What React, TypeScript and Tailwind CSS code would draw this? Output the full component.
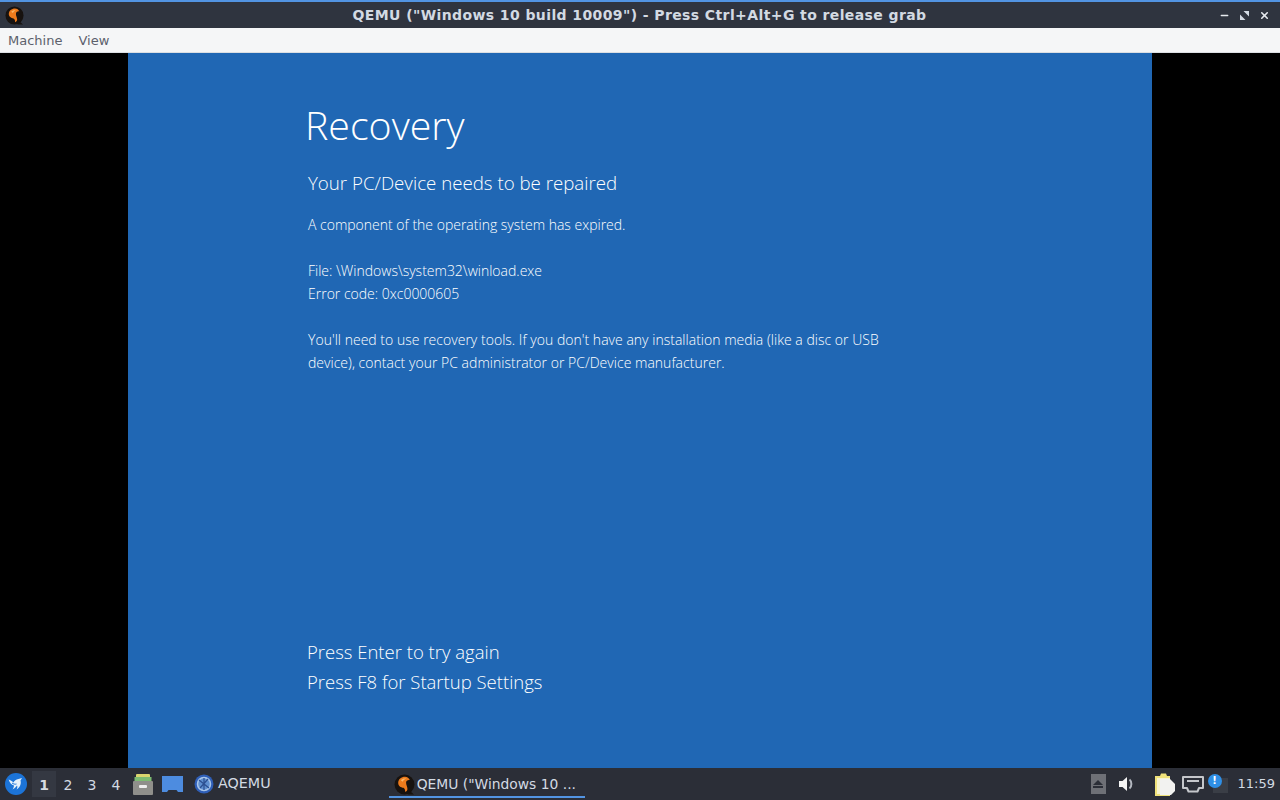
import { Minus, X } from "lucide-react";

const QemuLogo = ({ size }: { size: number }) => (
  <svg width={size} height={size} viewBox="0 0 20 20">
    <circle cx="10" cy="10" r="9.500" fill="#17120f" />
    <path d="M15 16l4 3.500h-6z" fill="#17120f" />
    <path d="M4 8.500C4 4.800 7 2.500 10.500 2.500c2.300 0 3.800 1.300 4.500 3.200-1.800-.4-3.500.6-3.500 2.600 0 2.200 1.300 3.700 1.300 6 0 1.500-1 2.400-2.300 2.700.3-1.500-.2-2.900-1.500-3.800C6.500 12.500 4 11.500 4 8.500z" fill="#ec7a1c" />
    <path d="M6.500 6c1.300-1.400 3.300-2 5.500-1.400-1.800.3-3 1.300-3.600 2.800z" fill="#f9b566" />
  </svg>
);

function Workspace({ n, active }: { n: string; active?: boolean }) {
  return (
    <div className={active ? "w-[24px] h-[26px] flex items-center justify-center pt-[2px] bg-[#343842] text-[#d8dce2] font-bold" : "w-[24px] h-[26px] flex items-center justify-center pt-[2px] text-[#d3dae3]"}>
      {n}
    </div>
  );
}

export default function App() {
  return (
    <div className="w-[1280px] h-[800px] flex flex-col overflow-hidden bg-black font-['DejaVu_Sans',sans-serif]">
      <div className="h-[28px] shrink-0 bg-[#2f343f] border-t-2 border-[#5294e2] flex items-center pl-[5px] pr-[10px]">
        <QemuLogo size={19} />
        <div className="flex-1 text-center text-[14px] tracking-[0.4px] font-bold text-[#d3dae3] pl-[36px]">QEMU ("Windows 10 build 10009") - Press Ctrl+Alt+G to release grab</div>
        <div className="flex items-center gap-[9px] text-[#e6e9ee]">
          <Minus size={11} strokeWidth={3} />
          <svg width="11" height="11" viewBox="0 0 11 11" fill="#d3dae3"><path d="M1 10V4.500L6.500 10zM10 1v5.500L4.500 1z" /></svg>
          <X size={11} strokeWidth={3.500} />
        </div>
      </div>
      <div className="h-[25px] shrink-0 bg-[#f5f6f7] border-b border-[#dcdfe3] flex items-center text-[13px] text-[#5c616c] pl-[8px] pt-[2px] gap-[16px]">
        <span>Machine</span>
        <span>View</span>
      </div>
      <div className="flex-1 min-h-0 flex justify-center bg-black">
        <div className="w-[1024px] bg-[#2067b4] text-white pl-[180px] flex flex-col font-['Open_Sans',sans-serif]">
          <h1 className="text-[39.300px] leading-[50px] font-light mt-[47px] -ml-[3px]">Recovery</h1>
          <h2 className="text-[18.700px] leading-[28px] font-light mt-[19px]">Your PC/Device needs to be repaired</h2>
          <p className="text-[14px] leading-[23px] font-light mt-[16px]">A component of the operating system has expired.</p>
          <p className="text-[14px] leading-[23px] font-light mt-[23px]">File: \Windows\system32\winload.exe<br />Error code: 0xc0000605</p>
          <p className="text-[14px] tracking-[0.02px] leading-[23px] font-light mt-[23px] w-[600px]">You'll need to use recovery tools. If you don't have any installation media (like a disc or USB<br />device), contact your PC administrator or PC/Device manufacturer.</p>
          <p className="text-[18.500px] leading-[30px] font-light mt-[263px] -ml-[1px]">Press Enter to try again<br />Press F8 for Startup Settings</p>
        </div>
      </div>
      <div className="h-[32px] shrink-0 bg-[#2b2e37] flex items-center text-[14px] pl-[4px] pr-[5px] text-[#d3dae3]">
        <svg width="24" height="24" viewBox="0 0 24 24">
          <circle cx="12" cy="12" r="11" fill="#1c74d8" />
          <path d="M4.500 7.500c2 .5 3.500 1.500 5 3 .8-1.600 2.500-3 5-3.500l3.500-1-1.500 2.500c1 3.500-.5 7-4 9 1-1.500 1-3 .5-4-1 1-2 3-4.500 4 1-1.500 1.500-3 1.500-4-2.500-.5-4.500-3-5.500-6.500z" fill="#e6f1fb" />
          <path d="M8 11c1.500 1 3 1.500 4.500 1" stroke="#1c74d8" fill="none" />
        </svg>
        <div className="flex items-center ml-[4px]">
          <Workspace n="1" active />
          <Workspace n="2" />
          <Workspace n="3" />
          <Workspace n="4" />
        </div>
        <svg width="20" height="21" viewBox="0 0 20 21" className="ml-[5px]">
          <rect x="3" y="0" width="14" height="4" rx="1" fill="#d9d46e" />
          <rect x="1.500" y="3" width="17" height="5" fill="#7dbb72" />
          <rect x="0" y="7" width="20" height="14" rx="1" fill="#8f8f8b" />
          <rect x="6" y="11" width="8" height="3" rx="1" fill="#eeeeee" />
        </svg>
        <svg width="21" height="16" viewBox="0 0 21 16" className="ml-[9px]">
          <path d="M0 0h21v16h-5l-1.500-2h-8L5 16H0z" fill="#4d8ce0" />
        </svg>
        <svg width="20" height="20" viewBox="0 0 20 20" className="ml-[11px]">
          <circle cx="10" cy="10" r="9.500" fill="#2f5fb8" />
          <circle cx="10" cy="10" r="6.500" fill="#5f8fd0" stroke="#a9c6ea" strokeWidth="1.500" />
          <path d="M5 6l10 8M6 14l8-9M10 4v12" stroke="#2c4f90" strokeWidth="1.200" />
        </svg>
        <span className="ml-[4px] text-[14.300px]">AQEMU</span>
        <div className="ml-[118px] w-[196px] h-[30px] self-start flex items-center pl-[5px] pt-[4px] border-b-2 border-[#5294e2]">
          <QemuLogo size={21} />
          <span className="ml-[2px] text-[13.850px]">QEMU ("Windows 10 ...</span>
        </div>
        <div className="flex-1" />
        <div className="w-[15px] h-[20px] bg-[#6e7076] flex flex-col items-center justify-center gap-[1px]">
          <div className="w-0 h-0 border-x-[5px] border-x-transparent border-b-[5px] border-b-[#2b2e37]" />
          <div className="w-[10px] h-[2px] bg-[#2b2e37]" />
        </div>
        <svg width="16" height="16" viewBox="0 0 16 16" className="ml-[13px]">
          <path d="M0 5h3.500L8 1v14l-4.500-4H0z" fill="#f4f4f4" />
          <path d="M10.500 3.500c2.500 2 2.500 7 0 9" fill="none" stroke="#b4b8c0" strokeWidth="2" />
        </svg>
        <svg width="20" height="23" viewBox="0 0 20 23" className="ml-[20px]">
          <path d="M0 3h5l1-2.500h5L12 3h3v20H0z" fill="#f0e27a" />
          <path d="M2 5h13v16H2z" fill="#f7f4cf" />
          <path d="M5 6h10l5 5v7l-4 4H5z" fill="#f2f2f0" />
        </svg>
        <svg width="22" height="17" viewBox="0 0 22 17" className="ml-[7px]">
          <path d="M1 1h20v11h-4l-1.500 3.500h-9L5 12H1z" fill="none" stroke="#c5c7cb" strokeWidth="2" strokeLinejoin="round" />
          <path d="M5 4h12v2H5z" fill="#c5c7cb" />
        </svg>
        <div className="ml-[4px] relative w-[20px] h-[20px]">
          <div className="absolute right-0 top-[4px] w-[15px] h-[15px] bg-[#3a3e46]" />
          <div className="absolute left-0 top-0 w-[14px] h-[14px] rounded-full bg-[#2f8fe6] text-white text-[10px] font-bold leading-[14px] text-center">!</div>
        </div>
        <span className="ml-[10px] text-[13px]">11:59</span>
      </div>
    </div>
  );
}
